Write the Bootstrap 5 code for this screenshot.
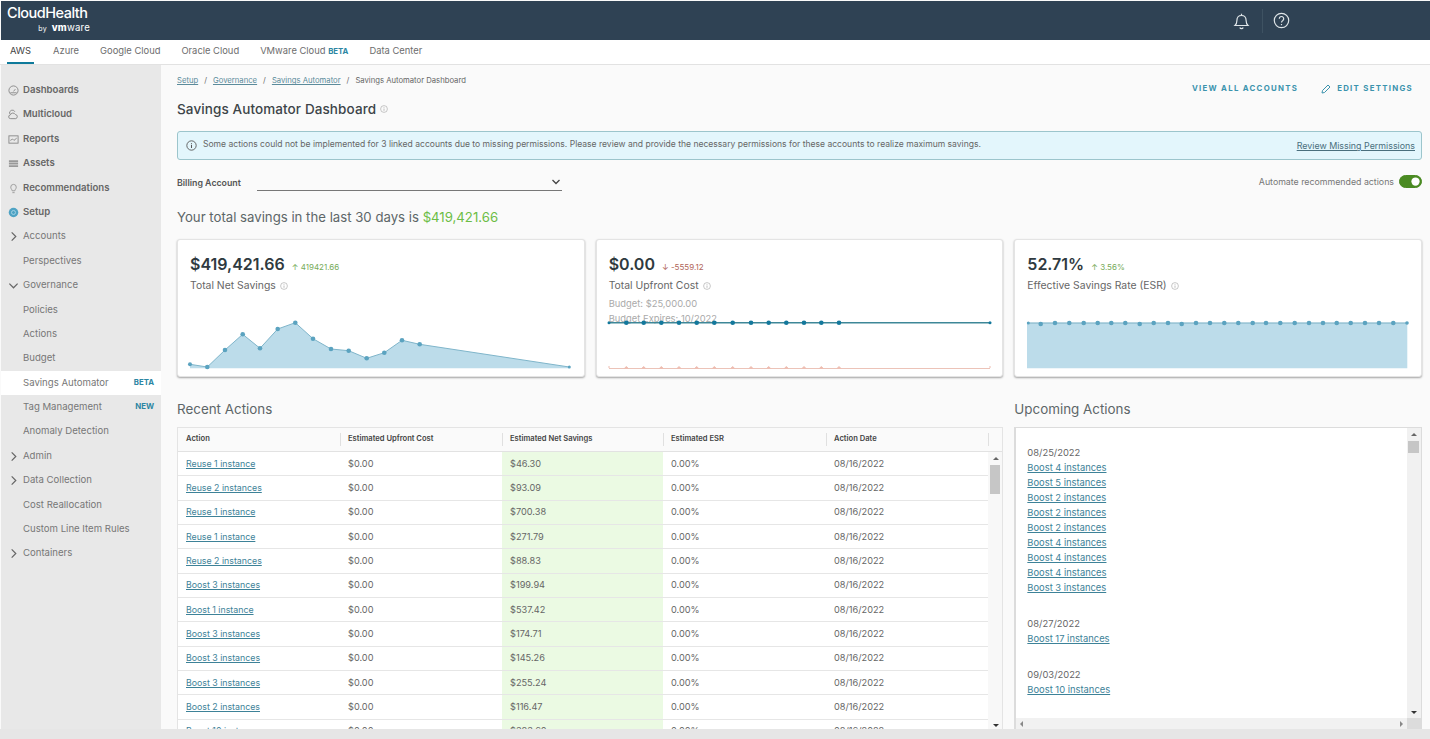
<!DOCTYPE html>
<html lang="en">
<head>
<meta charset="utf-8">
<title>Savings Automator Dashboard</title>
<link href="https://cdn.jsdelivr.net/npm/bootstrap@5.3.0/dist/css/bootstrap.min.css" rel="stylesheet">
<style>
html,body{height:739px;overflow:hidden}
body{font-family:Inter,"Noto Sans",sans-serif;background:#fafafa;color:#666;display:flex;flex-direction:column;font-size:9.5px;padding-top:1px}
a{color:#3d8298}
.top-bar{height:39px;background:#2f4254;padding:0 140px 0 6px;flex:none;margin-left:1px}
.logo-wrap{width:83px;color:#fff;line-height:1}
.logo-main{font-size:14.5px;font-weight:500;letter-spacing:-.5px;display:block;margin-top:-2px}
.logo-sub{font-size:9.6px;display:block;text-align:right;margin-top:2px;letter-spacing:.2px;word-spacing:2px}
.logo-sub small{font-size:7px}
.logo-sub b{font-weight:800}
.top-sep{width:1px;height:24px;background:#3e5262;margin:0 10px 0 12px}
.cloud-tabs{height:25px;background:#fff;border-bottom:1px solid #e2e2e2;padding-left:7px;gap:17px;flex:none;flex-wrap:nowrap}
.cloud-tab{color:#6d6d6d;font-size:9.4px;height:24px;line-height:22px;padding:0 2px;text-decoration:none;white-space:nowrap}
.cloud-tab.is-on{color:#444;border-bottom:2px solid #0f7a9b;width:27px;text-align:center}
.tag-blue{color:#2d86a3;font-size:7.8px;font-weight:700}
.app-mid{flex:1;min-height:0}
.side-col{width:160px;flex:none;background:#e8e8e8;padding-top:13px;margin-left:1px;margin-right:-1px}
.side-row{height:24.4px;display:flex;align-items:center;color:#777;font-size:9.6px;padding:0 7px 0 22px;text-decoration:none;position:relative;white-space:nowrap}
.side-row.is-main{font-weight:600;color:#666}
.side-row.is-on{background:#fff}
.side-row svg{position:absolute;left:7px;top:7px;width:11px;height:11px}
.main-col{flex:1;min-width:0;padding:10px 8px 0 17px;overflow:hidden}
.top-row{height:20px}
.crumbs{font-size:7.7px;color:#666;height:12px;gap:6px;align-items:center}
.crumbs a{color:#5b8b9b}
.act-link{color:#3b93ad;font-weight:700;font-size:7.8px;letter-spacing:1.3px;text-decoration:none;white-space:nowrap}
.head-links{padding-right:9px;align-self:flex-end}
.pen-icon{margin:0 6px 0 23px}
.head-row{height:28px}
.page-title{font-size:13.5px;font-weight:500;color:#3c4448;margin:0;letter-spacing:.1px}
.mini-info{width:8px;height:8px;color:#aaa;margin-left:4px}
.notice{height:29px;background:#e3f6fc;border:1.5px solid #9cc5cc;border-radius:3px;padding:0 6px 0 8px;margin-top:8px;font-size:8.55px;color:#666;white-space:nowrap}
.notice-msg{margin:-2px 0 0 -2px}
.notice a{font-size:8.9px;color:#4a6f7d;margin-top:1px}
.notice-icon{color:#555;flex:none}
.filter-row{height:20px;margin-top:13px}
.bill-label{font-weight:600;color:#555;font-size:8.8px;width:80px;padding-top:3px}
.bill-select{width:305px;height:18px;border-bottom:1px solid #777;padding-right:1px}
.auto-zone{padding-top:2px!important}
.auto-txt{font-size:8.8px;color:#777;margin-right:5px}
.auto-switch.form-check-input{width:23px;height:13px;margin:0;background-color:#4a8a22;border-color:#4a8a22;float:none}
.total-line{font-size:13.2px;color:#5d6668;margin:13px 0 11px;line-height:22px}
.total-line span{color:#6cbd45}
.tile-grid{display:grid;grid-template-columns:repeat(3,1fr);gap:11px}
.tile{height:138px;background:#fff;border:1px solid #e4e4e4;border-radius:3px;box-shadow:0 1px 2px rgba(0,0,0,.35);padding:12px 12px;position:relative;overflow:hidden}
.tile svg.chart{position:absolute;left:-1px;top:-1px;width:408px;height:138px}
.tile-val{font-size:16px;font-weight:600;color:#2f3a40;line-height:24px}
.tile-delta{font-size:8px;font-weight:400;margin-left:3px}
.up{color:#77ab5a}.down{color:#b0665a}
.tile-name{font-size:10.4px;color:#666;line-height:17px;margin-top:-2px}
.tile-note{font-size:9.4px;color:#aaa;line-height:15px;margin-top:2px}
.tile-note + .tile-note{margin-top:0}
.sect-title{font-size:13.4px;color:#5d6668;font-weight:400;margin:0;line-height:18px;padding-top:23px;height:50px}
.low-grid{display:grid;grid-template-columns:repeat(3,1fr);column-gap:11px}
.wide-cell{grid-column:span 2;min-width:0}
.grid-box{height:302px;overflow:hidden;background:#fff;border:1px solid #e4e4e4;border-bottom:0}
.grid-box .table{table-layout:fixed;margin:0;width:825px;font-size:9.2px;--bs-table-bg:transparent;--bs-table-color:#666}
.grid-box th{background:#fafafa;height:23.5px;font-size:7.6px;font-weight:600;color:#444;padding:0 8px 1px;border-bottom:1px solid #e2e2e2;vertical-align:middle;position:relative}
.grid-box th + th::before{content:"";position:absolute;left:0;top:5px;bottom:5px;width:1px;background:#e0e0e0}
.grid-box td{height:24.33px;padding:0 8px;border-bottom:1px solid #e6e6e6;vertical-align:middle;color:#666}
.grid-box td a{font-size:8.8px}
.grid-box td.gain{background:#ebfae3}
.grid-box td.rail-cell{padding:0;vertical-align:top;border:0;background:#f8f8f8}
.rail{height:277px;position:relative;display:flex;flex-direction:column;align-items:center;justify-content:space-between;padding:5px 0 2px}
.rail-thumb{position:absolute;top:13px;left:2px;width:10px;height:29px;background:#c6c6c6}
.tri-up,.tri-down,.tri-left,.tri-right{width:0;height:0;border:3px solid transparent;display:block}
.tri-up{border-bottom-color:#666;border-top-width:0}
.tri-down{border-top-color:#333;border-bottom-width:0}
.tri-left{border-right-color:#888;border-left-width:0}
.tri-right{border-left-color:#888;border-right-width:0}
.next-box{height:302px;display:grid;grid-template-columns:1fr 14px;grid-template-rows:1fr 11px;background:#fff;border:1px solid #dcdcdc;border-left-width:2px;border-bottom:0;overflow:hidden}
.next-list{padding:17px 11px 0;font-size:9.4px;line-height:15px;overflow:hidden;color:#666}
.next-list a{display:block;color:#3d8298}
.next-list .group{margin-bottom:21px}
.next-rail{background:#f1f1f1;position:relative;display:flex;flex-direction:column;align-items:center;justify-content:space-between;padding:5px 0 4px}
.next-thumb{position:absolute;top:13px;left:1px;width:11px;height:12px;background:#c6c6c6}
.next-hbar{background:#f1f1f1;display:flex;align-items:center;justify-content:space-between;padding:0 4px}
.next-corner{background:#dcdcdc}
.foot-strip{height:10px;background:#e6e6e6;flex:none}
</style>
</head>
<body>
<svg width="0" height="0" class="d-none">
<symbol id="i-info" viewBox="0 0 16 16"><circle cx="8" cy="8" r="6.8" fill="none" stroke="currentColor" stroke-width="1.3"/><path d="M8 7v4.600M8 4.200v1.400" stroke="currentColor" stroke-width="1.500" fill="none"/></symbol>
<symbol id="i-right" viewBox="0 0 12 12"><path d="M4 1.500 8.500 6 4 10.500" fill="none" stroke="#666" stroke-width="1.300"/></symbol>
<symbol id="i-down" viewBox="0 0 12 12"><path d="M1.500 4 6 8.500 10.500 4" fill="none" stroke="#666" stroke-width="1.300"/></symbol>
</svg>

<nav class="navbar top-bar d-flex justify-content-between align-items-center flex-nowrap">
  <div class="logo-wrap">
    <span class="logo-main">CloudHealth</span>
    <span class="logo-sub"><small>by</small> <b>vm</b>ware</span>
  </div>
  <div class="d-flex align-items-center">
    <svg width="17" height="18" viewBox="0 0 17 18" fill="none" stroke="#dfe5e8" stroke-width="1.200"><path d="M2 13.500c1.400-1.300 1.900-2.700 1.900-5 0-3 1.800-5 4.600-5s4.600 2 4.600 5c0 2.300.5 3.700 1.900 5z"/><path d="M8.500 3.500V1.800M6.800 15.500a1.800 1.800 0 0 0 3.400 0"/></svg>
    <span class="top-sep"></span>
    <svg width="17" height="17" viewBox="0 0 17 17" fill="none" stroke="#dfe5e8" stroke-width="1.200"><circle cx="8.500" cy="8.500" r="7.200"/><path d="M6.300 6.700a2.200 2.200 0 1 1 3.500 1.800c-.9.600-1.300 1-1.300 2"/><path d="M8.500 12v1.200"/></svg>
  </div>
</nav>

<div class="nav cloud-tabs">
  <a class="cloud-tab is-on" href="#">AWS</a>
  <a class="cloud-tab" href="#">Azure</a>
  <a class="cloud-tab" href="#">Google Cloud</a>
  <a class="cloud-tab" href="#">Oracle Cloud</a>
  <a class="cloud-tab" href="#">VMware Cloud <span class="tag-blue">BETA</span></a>
  <a class="cloud-tab" href="#">Data Center</a>
</div>

<div class="app-mid d-flex">
  <aside class="side-col">
    <a class="side-row is-main" href="#"><svg viewBox="0 0 12 12" fill="none" stroke="#888"><circle cx="6" cy="6" r="5"/><path d="M6 7 8 4.500M2.500 8.500h7"/></svg>Dashboards</a>
    <a class="side-row is-main" href="#"><svg viewBox="0 0 12 12" fill="none" stroke="#888"><path d="M2 5.500a3 3 0 0 1 5.500-2.500"/><path d="M3 10.500a2 2 0 0 1-.5-4 3 3 0 0 1 5.500-.5 2.300 2.300 0 0 1 .5 4.500z"/></svg>Multicloud</a>
    <a class="side-row is-main" href="#"><svg viewBox="0 0 12 12" fill="none" stroke="#888"><rect x="1" y="2" width="10" height="8"/><path d="M2.500 7 5 5.500l1.500 1.500L9.500 4.500"/></svg>Reports</a>
    <a class="side-row is-main" href="#"><svg viewBox="0 0 12 12" fill="#999"><path d="M1 2.500h10v2H1zM1 5.200h10v2H1zM1 7.900h10v2H1z"/></svg>Assets</a>
    <a class="side-row is-main" href="#"><svg viewBox="0 0 12 12" fill="none" stroke="#999"><path d="M4.500 8.500C4.500 7 3 6.500 3 4.500a3 3 0 0 1 6 0c0 2-1.500 2.500-1.500 4zM4.800 10.500h2.400"/></svg>Recommendations</a>
    <a class="side-row is-main" href="#"><svg viewBox="0 0 12 12"><circle cx="6" cy="6" r="5.200" fill="#4fa3c4"/><circle cx="6" cy="6" r="2.200" fill="none" stroke="#a7d4e6"/></svg>Setup</a>
    <a class="side-row" href="#"><svg><use href="#i-right"/></svg>Accounts</a>
    <a class="side-row" href="#">Perspectives</a>
    <a class="side-row" href="#"><svg><use href="#i-down"/></svg>Governance</a>
    <a class="side-row" href="#">Policies</a>
    <a class="side-row" href="#">Actions</a>
    <a class="side-row" href="#">Budget</a>
    <a class="side-row is-on" href="#">Savings Automator<span class="tag-blue ms-auto">BETA</span></a>
    <a class="side-row" href="#">Tag Management<span class="tag-blue ms-auto">NEW</span></a>
    <a class="side-row" href="#">Anomaly Detection</a>
    <a class="side-row" href="#"><svg><use href="#i-right"/></svg>Admin</a>
    <a class="side-row" href="#"><svg><use href="#i-right"/></svg>Data Collection</a>
    <a class="side-row" href="#">Cost Reallocation</a>
    <a class="side-row" href="#">Custom Line Item Rules</a>
    <a class="side-row" href="#"><svg><use href="#i-right"/></svg>Containers</a>
  </aside>

  <main class="main-col">
    <div class="top-row d-flex justify-content-between">
      <div class="crumbs d-flex"><a href="#">Setup</a><span>/</span><a href="#">Governance</a><span>/</span><a href="#">Savings Automator</a><span>/</span><span>Savings Automator Dashboard</span></div>
      <div class="head-links d-flex align-items-center">
        <a class="act-link" href="#">VIEW ALL ACCOUNTS</a>
        <svg class="pen-icon" width="10" height="10" viewBox="0 0 10 10" fill="none" stroke="#3b93ad"><path d="M1 9 1.500 6.500 7 1l2 2-5.500 5.500z"/></svg>
        <a class="act-link" href="#">EDIT SETTINGS</a>
      </div>
    </div>
    <div class="head-row d-flex align-items-center">
      <h1 class="page-title">Savings Automator Dashboard</h1><svg class="mini-info"><use href="#i-info"/></svg>
    </div>
    <div class="notice d-flex align-items-center justify-content-between">
      <div class="d-flex align-items-center gap-2"><svg class="notice-icon" width="11" height="11"><use href="#i-info"/></svg><span class="notice-msg">Some actions could not be implemented for 3 linked accounts due to missing permissions. Please review and provide the necessary permissions for these accounts to realize maximum savings.</span></div>
      <a href="#">Review Missing Permissions</a>
    </div>
    <div class="filter-row d-flex justify-content-between">
      <div class="d-flex">
        <div class="bill-label">Billing Account</div>
        <div class="bill-select d-flex justify-content-end align-items-center"><svg width="10" height="10" viewBox="0 0 10 10" fill="none" stroke="#444" stroke-width="1.300"><path d="M1.500 3 5 6.500 8.500 3"/></svg></div>
      </div>
      <div class="auto-zone d-flex align-items-start form-switch p-0">
        <span class="auto-txt">Automate recommended actions</span>
        <input class="form-check-input auto-switch" type="checkbox" role="switch" checked aria-label="Automate recommended actions">
      </div>
    </div>
    <div class="total-line">Your total savings in the last 30 days is <span>$419,421.66</span></div>

    <div class="tile-grid">
      <section class="tile">
        <svg class="chart" viewBox="0 0 408 138">
          <path d="M13 125.300 30.300 128 48 111 65.700 95.300 83 109.300 100.700 90 118.300 83.700 136 99.700 154 110 171.700 111.700 189.700 119.300 207.300 113.700 225 101.300 242.700 105.300 392.300 128V129.300H13z" fill="#bcdcea" stroke="none"/>
          <path d="M13 125.300 30.300 128 48 111 65.700 95.300 83 109.300 100.700 90 118.300 83.700 136 99.700 154 110 171.700 111.700 189.700 119.300 207.300 113.700 225 101.300 242.700 105.300 392.300 128" fill="none" stroke="#7fb5ca" stroke-width="1"/>
          <g fill="#5ba3c0"><circle cx="13" cy="125.300" r="2"/><circle cx="30.300" cy="128" r="2.300"/><circle cx="48" cy="111" r="2.300"/><circle cx="65.700" cy="95.300" r="2.300"/><circle cx="83" cy="109.300" r="2.300"/><circle cx="100.700" cy="90" r="2.300"/><circle cx="118.300" cy="83.700" r="2.300"/><circle cx="136" cy="99.700" r="2.300"/><circle cx="154" cy="110" r="2.300"/><circle cx="171.700" cy="111.700" r="2.300"/><circle cx="189.700" cy="119.300" r="2.300"/><circle cx="207.300" cy="113.700" r="2.300"/><circle cx="225" cy="101.300" r="2.300"/><circle cx="242.700" cy="105.300" r="2.300"/><circle cx="392.300" cy="128" r="1.500"/></g>
        </svg>
        <div class="tile-val position-relative">$419,421.66 <span class="tile-delta up">↑ 419421.66</span></div>
        <div class="tile-name d-flex align-items-center position-relative">Total Net Savings<svg class="mini-info"><use href="#i-info"/></svg></div>
      </section>
      <section class="tile">
        <div class="tile-val">$0.00 <span class="tile-delta down">↓ -5559.12</span></div>
        <div class="tile-name d-flex align-items-center">Total Upfront Cost<svg class="mini-info"><use href="#i-info"/></svg></div>
        <div class="tile-note">Budget: $25,000.00</div>
        <div class="tile-note">Budget Expires: 10/2022</div>
        <svg class="chart" viewBox="0 0 408 138">
          <path d="M13 83.700H394" stroke="#3e8798" stroke-width="1.500" fill="none"/>
          <g fill="#13789c"><circle cx="13" cy="83.700" r="1.500"/><circle cx="30.300" cy="83.700" r="2.300"/><circle cx="47.700" cy="83.700" r="2.300"/><circle cx="65.300" cy="83.700" r="2.300"/><circle cx="83" cy="83.700" r="2.300"/><circle cx="100.700" cy="83.700" r="2.300"/><circle cx="118.300" cy="83.700" r="2.300"/><circle cx="136.700" cy="83.700" r="2.300"/><circle cx="155" cy="83.700" r="2.300"/><circle cx="172.700" cy="83.700" r="2.300"/><circle cx="190.300" cy="83.700" r="2.300"/><circle cx="208" cy="83.700" r="2.300"/><circle cx="225.300" cy="83.700" r="2.300"/><circle cx="243" cy="83.700" r="2.300"/><circle cx="394" cy="83.700" r="1.500"/></g>
          <path d="M13 129.500H394" stroke="#ecc3b8" stroke-width="1" fill="none"/>
          <path d="M13 129V127M28.300 129.500l2-2 2 2M45.700 129.500l2-2 2 2M63.300 129.500l2-2 2 2M81 129.500l2-2 2 2M98.700 129.500l2-2 2 2M116.300 129.500l2-2 2 2M134.700 129.500l2-2 2 2M153 129.500l2-2 2 2M170.700 129.500l2-2 2 2M188.300 129.500l2-2 2 2M206 129.500l2-2 2 2M223.300 129.500l2-2 2 2M241 129.500l2-2 2 2M394 129V127" fill="#eebcb0" stroke="#eebcb0"/>
        </svg>
      </section>
      <section class="tile">
        <svg class="chart" viewBox="0 0 408 138">
          <path d="M13 84.300H393.300V129.300H13z" fill="#bcdcea"/>
          <path d="M13 84H393.300" stroke="#6ba8c0" stroke-width="1" fill="none"/>
          <g fill="#5ba3c0"><circle cx="14.300" cy="84" r="1.500"/><circle cx="26.700" cy="85" r="2.300"/><circle cx="41" cy="84" r="2.300"/><circle cx="55.300" cy="84" r="2.300"/><circle cx="69.700" cy="84" r="2.300"/><circle cx="83.700" cy="84" r="2.300"/><circle cx="97.300" cy="84" r="2.300"/><circle cx="111.300" cy="84" r="2.300"/><circle cx="125.700" cy="85" r="2.300"/><circle cx="139.700" cy="84" r="2.300"/><circle cx="154" cy="84" r="2.300"/><circle cx="167.700" cy="85" r="2.300"/><circle cx="182" cy="84" r="2.300"/><circle cx="196" cy="84" r="2.300"/><circle cx="210.300" cy="84" r="2.300"/><circle cx="224.300" cy="84" r="2.300"/><circle cx="238.700" cy="84" r="2.300"/><circle cx="252" cy="84" r="2.300"/><circle cx="266.300" cy="84" r="2.300"/><circle cx="280.700" cy="84" r="2.300"/><circle cx="295" cy="84" r="2.300"/><circle cx="309" cy="84" r="2.300"/><circle cx="322.700" cy="84" r="2.300"/><circle cx="336.700" cy="84" r="2.300"/><circle cx="351" cy="84" r="2.300"/><circle cx="365" cy="84" r="2.300"/><circle cx="379.300" cy="84" r="2.300"/><circle cx="393" cy="84" r="1.800"/></g>
        </svg>
        <div class="tile-val position-relative">52.71% <span class="tile-delta up">↑ 3.56%</span></div>
        <div class="tile-name d-flex align-items-center position-relative">Effective Savings Rate (ESR)<svg class="mini-info"><use href="#i-info"/></svg></div>
      </section>
    </div>

    <div class="low-grid">
      <div class="wide-cell">
        <h2 class="sect-title">Recent Actions</h2>
        <div class="grid-box">
          <table class="table">
            <colgroup><col style="width:162px"><col style="width:162px"><col style="width:161px"><col style="width:163px"><col style="width:162px"><col style="width:15px"></colgroup>
            <thead><tr><th>Action</th><th>Estimated Upfront Cost</th><th>Estimated Net Savings</th><th>Estimated ESR</th><th>Action Date</th><th></th></tr></thead>
            <tbody>
              <tr><td><a href="#">Reuse 1 instance</a></td><td>$0.00</td><td class="gain">$46.30</td><td>0.00%</td><td>08/16/2022</td>
                <td class="rail-cell" rowspan="12"><div class="rail"><i class="tri-up"></i><span class="rail-thumb"></span><i class="tri-down"></i></div></td></tr>
              <tr><td><a href="#">Reuse 2 instances</a></td><td>$0.00</td><td class="gain">$93.09</td><td>0.00%</td><td>08/16/2022</td></tr>
              <tr><td><a href="#">Reuse 1 instance</a></td><td>$0.00</td><td class="gain">$700.38</td><td>0.00%</td><td>08/16/2022</td></tr>
              <tr><td><a href="#">Reuse 1 instance</a></td><td>$0.00</td><td class="gain">$271.79</td><td>0.00%</td><td>08/16/2022</td></tr>
              <tr><td><a href="#">Reuse 2 instances</a></td><td>$0.00</td><td class="gain">$88.83</td><td>0.00%</td><td>08/16/2022</td></tr>
              <tr><td><a href="#">Boost 3 instances</a></td><td>$0.00</td><td class="gain">$199.94</td><td>0.00%</td><td>08/16/2022</td></tr>
              <tr><td><a href="#">Boost 1 instance</a></td><td>$0.00</td><td class="gain">$537.42</td><td>0.00%</td><td>08/16/2022</td></tr>
              <tr><td><a href="#">Boost 3 instances</a></td><td>$0.00</td><td class="gain">$174.71</td><td>0.00%</td><td>08/16/2022</td></tr>
              <tr><td><a href="#">Boost 3 instances</a></td><td>$0.00</td><td class="gain">$145.26</td><td>0.00%</td><td>08/16/2022</td></tr>
              <tr><td><a href="#">Boost 3 instances</a></td><td>$0.00</td><td class="gain">$255.24</td><td>0.00%</td><td>08/16/2022</td></tr>
              <tr><td><a href="#">Boost 2 instances</a></td><td>$0.00</td><td class="gain">$116.47</td><td>0.00%</td><td>08/16/2022</td></tr>
              <tr><td><a href="#">Boost 10 instances</a></td><td>$0.00</td><td class="gain">$383.60</td><td>0.00%</td><td>08/16/2022</td></tr>
            </tbody>
          </table>
        </div>
      </div>
      <div>
        <h2 class="sect-title">Upcoming Actions</h2>
        <div class="next-box">
          <div class="next-list">
            <div class="group">08/25/2022
              <a href="#">Boost 4 instances</a><a href="#">Boost 5 instances</a><a href="#">Boost 2 instances</a><a href="#">Boost 2 instances</a><a href="#">Boost 2 instances</a><a href="#">Boost 4 instances</a><a href="#">Boost 4 instances</a><a href="#">Boost 4 instances</a><a href="#">Boost 3 instances</a>
            </div>
            <div class="group">08/27/2022
              <a href="#">Boost 17 instances</a>
            </div>
            <div class="group">09/03/2022
              <a href="#">Boost 10 instances</a>
            </div>
          </div>
          <div class="next-rail"><i class="tri-up"></i><span class="next-thumb"></span><i class="tri-down"></i></div>
          <div class="next-hbar"><i class="tri-left"></i><i class="tri-right"></i></div>
          <div class="next-corner"></div>
        </div>
      </div>
    </div>
  </main>
</div>
<div class="foot-strip"></div>
</body>
</html>
